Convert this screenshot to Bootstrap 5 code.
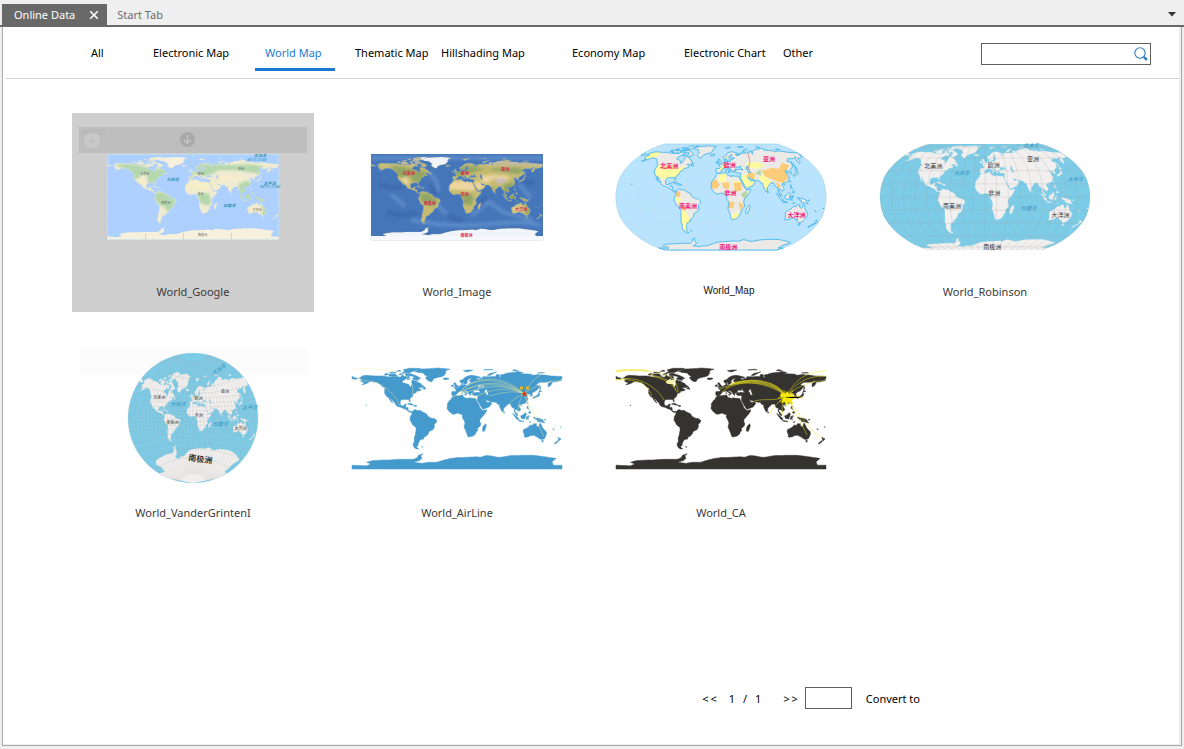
<!DOCTYPE html>
<html lang="en">
<head>
<meta charset="utf-8">
<meta name="viewport" content="width=device-width, initial-scale=1">
<title>Online Data</title>
<link href="https://cdn.jsdelivr.net/npm/bootstrap@5.3.0/dist/css/bootstrap.min.css" rel="stylesheet">
<style>
  body { background: #efefef; color: #000; font: 11px/16px "Noto Sans", "Noto Sans CJK SC", sans-serif; }
  a { color: inherit; text-decoration: none; }
  .doc-tabs { height: 27px; padding: 4px 8px 0 2px; border-bottom: 2px solid #696969; color: #6b6b6b; }
  .doc-tab { height: 21px; line-height: 21px; }
  .doc-tab.current { background: #696969; color: #fff; padding: 0 8px 0 12px; margin-right: 10px; gap: 14px; }
  .plain { background: none; border: 0; padding: 0; color: inherit; line-height: inherit; display: block; }
  .sheet { background: #fff; margin: 0 2px 3px; border: solid #a9a9a9; border-width: 0 1px 1px; box-shadow: inset -2px -1px #efefef; }
  .filters { height: 52px; margin: 0 2px 0 3px; padding: 0 28px 0 75px; border-bottom: 1px solid #d0d0d0; }
  .kinds { display: grid; grid-template-columns: 62px 112px 90px 86px 131px 112px 99px auto; white-space: nowrap; }
  .kinds a { display: block; width: max-content; height: 34px; margin-top: 10px; padding: 8px 10px 0; }
  .kinds a.active { width: 80px; color: #1c78d0; border-bottom: 3px solid #1c78d0; }
  .find { width: 170px; height: 22px; margin-top: 16px; border: 1px solid #5f5f5f; padding-right: 2px; }
  .find input, .page-no { font-size: 11px; outline: 0; }
  .tiles { display: grid; grid-template-columns: repeat(auto-fill, 242px); gap: 22px; padding: 34px 0 34px 69px; }
  .tile { height: 199px; font-size: 11px; color: #3a3a3a; }
  .tile.picked { background: #cecece; }
  .thumb { height: 168px; }
  .thumb svg { position: relative; display: block; overflow: visible; }
  .tools { position: absolute; top: 14px; left: 7px; right: 7px; height: 26px; background: #fbfbfb; }
  .picked .tools { background: #bebebe; }
  .name { line-height: 22px; }
  .name.alt { font-family: "Liberation Sans", sans-serif; font-size: 10px; line-height: 20px; padding-left: 16px; color: #111; }
  .pager { padding: 0 261px 34px 0; line-height: 24px; }
  .count { margin: 0 22px 0 12px; }
  .page-no { width: 47px; height: 22px; border: 1px solid #5f5f5f; border-radius: 0; margin: 0 14px 0 7px; }
</style>
</head>
<body class="d-flex flex-column min-vh-100">
<header class="doc-tabs d-flex">
  <div class="doc-tab current d-flex align-items-center">
    <a href="#online">Online Data</a>
    <button class="plain" type="button" aria-label="Close tab"><svg class="d-block" width="10" height="10" viewBox="0 0 10 10" stroke="#fff" stroke-width="1.6"><path d="M1.2 1.2l7.600 7.600M8.800 1.200L1.200 8.800"/></svg></button>
  </div>
  <a class="doc-tab" href="#start">Start Tab</a>
  <button class="plain ms-auto align-self-center" type="button" aria-label="Tab list"><svg class="d-block" width="8" height="5" viewBox="0 0 8 5"><path d="M0 0h8L4 4.500z" fill="#333"/></svg></button>
</header>

<main class="sheet flex-grow-1 d-flex flex-column">
  <div class="filters d-flex justify-content-between">
    <nav class="kinds" aria-label="Map kinds">
      <a href="#all">All</a>
      <a href="#electronic">Electronic Map</a>
      <a href="#world" class="active" aria-current="page">World Map</a>
      <a href="#thematic">Thematic Map</a>
      <a href="#hillshading">Hillshading Map</a>
      <a href="#economy">Economy Map</a>
      <a href="#chart">Electronic Chart</a>
      <a href="#other">Other</a>
    </nav>
    <form class="find d-flex align-items-center">
      <input class="plain flex-grow-1 w-100" type="text" aria-label="Search maps">
      <button class="plain" type="button" aria-label="Search"><svg class="d-block" width="14" height="14" viewBox="0 0 14 14" fill="none" stroke="#2a7ac0"><circle cx="6" cy="6" r="5.200" stroke-width="1.100"/><path d="M9.800 9.800L13 13" stroke-width="2.400"/></svg></button>
    </form>
  </div>

  <section class="tiles" aria-label="Maps">
    <a href="#google" class="tile picked text-center">
      <div class="thumb position-relative d-flex align-items-center justify-content-center">
        <div class="tools"><svg width="228" height="26" viewBox="0 0 228 26" fill="none"><circle cx="13" cy="13" r="8" fill="#c9c9c9"/><path d="M13 8v8M10 13l3 3 3-3" stroke="#bebebe" stroke-width="1.500"/><path d="M2 6h21M5 4h7M14 3h11v4h-6" stroke="#b0b0b0" stroke-dasharray="2 1"/><circle cx="108.500" cy="12.500" r="7.500" fill="#a9a9a9"/><path d="M108.500 8v8.500M105 13l3.500 3.500 3.500-3.500" stroke="#c8c8c8" stroke-width="1.200"/></svg></div>
        <svg data-map="google" width="172" height="86" viewBox="0 0 172 86"></svg>
      </div>
      <div class="name">World_Google</div>
    </a>
    <a href="#image" class="tile text-center">
      <div class="thumb position-relative d-flex align-items-center justify-content-center"><svg data-map="image" width="172" height="86" viewBox="0 0 172 86"></svg></div>
      <div class="name">World_Image</div>
    </a>
    <a href="#map" class="tile text-center">
      <div class="thumb position-relative d-flex align-items-center justify-content-center"><svg data-map="political" width="210" height="106" viewBox="0 0 210 106"></svg></div>
      <div class="name alt">World_Map</div>
    </a>
    <a href="#robinson" class="tile text-center">
      <div class="thumb position-relative d-flex align-items-center justify-content-center"><svg data-map="robinson" width="210" height="106" viewBox="0 0 210 106"></svg></div>
      <div class="name">World_Robinson</div>
    </a>
    <a href="#grinten" class="tile text-center">
      <div class="thumb position-relative d-flex align-items-center justify-content-center"><div class="tools"></div><svg data-map="grinten" width="130" height="130" viewBox="0 0 130 130"></svg></div>
      <div class="name">World_VanderGrintenI</div>
    </a>
    <a href="#airline" class="tile text-center">
      <div class="thumb position-relative d-flex align-items-center justify-content-center"><svg data-map="airline" width="210" height="101" viewBox="0 0 210 101"></svg></div>
      <div class="name">World_AirLine</div>
    </a>
    <a href="#ca" class="tile text-center">
      <div class="thumb position-relative d-flex align-items-center justify-content-center"><svg data-map="ca" width="210" height="101" viewBox="0 0 210 101"></svg></div>
      <div class="name">World_CA</div>
    </a>
  </section>

  <footer class="pager mt-auto d-flex justify-content-end">
    <button class="plain" type="button" aria-label="Previous page">&lt;&thinsp;&lt;</button>
    <span class="count d-flex gap-2"><span>1</span><span>/</span><span>1</span></span>
    <button class="plain" type="button" aria-label="Next page">&gt;&thinsp;&gt;</button>
    <input class="page-no" type="text" aria-label="Page number">
    <button class="plain" type="button">Convert to</button>
  </footer>
</main>
<script src="https://cdn.jsdelivr.net/npm/bootstrap@5.3.0/dist/js/bootstrap.bundle.min.js"></script>
<script>
// Coastlines as longitude,latitude rings.
const land = `
-168,66 -162,70 -156,71 -141,70 -128,70 -115,68 -108,68 -96,68 -94,72 -90,69 -82,69 -81,67 -86,66 -94,61 -94,58.5 -88,57 -82,55 -82,52 -79,51.5 -77,56 -78,60 -77,62.5 -70,61.5 -66,58.5 -62,57 -60,54 -56,52 -60,50 -67,50 -65,48.5 -61,46 -64,44.5 -70,43.5 -70,41.5 -74,40 -76,37 -76,35 -81,31 -80,26 -81,25.5 -83,29.5 -85,29.8 -90,29.5 -94,29.5 -97,27.5 -97.5,22 -95,18.5 -91,19 -90,21.3 -87,21.5 -88.5,16 -84,15.8 -83.5,11 -81,9 -78,9.3 -77.3,8 -80,7.5 -83,8.5 -86,11.5 -88,13 -92,14 -95,16 -101,17.3 -105,20 -106,23 -109,26 -112,30 -114.5,31.5 -112,27 -110,23.2 -112,25 -115,28.5 -117,32.5 -120.5,34.5 -124,40 -124,47 -123,49 -128,51.5 -131,55 -136,58.5 -145,60.3 -150,60 -153,58 -160,55.5 -163,55 -158,58.5 -162,59 -165,61 -165,63.5 -161,64.5
-62,66 -68,63 -66,62 -77,64.5 -73,68 -78,70 -88,70.5 -89,73.5 -80,73.7 -72,71 -67,69
-117,70 -116,73 -106,73.5 -101,69 -110,68.7
-125,72 -121,74.5 -117,73 -122,71
-90,77 -92,80.5 -82,83 -65,83 -62,82 -73,79 -79,76.3
-94,75 -92,76.6 -80,75.5 -82,74.5
-116,75 -112,76.5 -105,76 -105,75
-100,72 -97,74 -92,74 -96,72
-104,78 -98,80 -96,78
-86,64 -84,66 -80,64
-59,48 -56,51.5 -53,47
-85,22 -80,23.3 -74,20 -78,20
-74,18.5 -72,20 -68.5,18.6 -71,17.6
-73,78 -67,80 -60,82 -45,82.5 -33,83.6 -22,82.5 -12,81.5 -18,80 -20,76 -19,74 -22,72 -22,70.5 -27,68.5 -33,67.5 -40,65 -43,60 -48,61 -52,64 -54,67 -51,69.5 -55,71.5 -58,75 -67,76
-24,65.5 -22,66.4 -16,66.5 -13.5,65 -19,63.4 -22.5,64
-77.3,8 -75,11 -71.7,12.3 -68,11 -62,10.6 -60,8.5 -52,5 -50,1 -44,-2.5 -39,-3 -35,-6 -35,-9 -39,-13 -39,-18 -41,-22 -48,-25.5 -49,-29 -53,-33.5 -57,-35 -57,-38 -62,-39 -65,-42 -65.5,-45 -67.5,-46.5 -66,-48 -69,-51 -68.5,-53 -65.5,-55 -70,-55 -74,-52 -75.5,-47 -73,-42 -73.5,-37 -71.5,-31 -70.3,-24 -70.3,-18.3 -76,-14 -79,-8 -81,-5 -80,-2.5 -80,0.5 -77.5,4
-61,-51.5 -59,-51.3 -58.5,-52.3
-6,35.8 0,36 10,37.2 11,34 15,32.3 20,31 20,32.8 25,31.7 31,31.5 32.5,31 32.5,29.8 35.5,24 37.3,20.5 39.5,15.5 43,12 44,10.5 51,12 50.5,9.5 47.5,4.5 43,-0.5 39.5,-4.5 39,-8 40.7,-11 40.5,-15 35,-20 35.5,-24 32.8,-26 32.5,-28.5 28,-33 20,-34.8 18.3,-33.5 17,-29 14.5,-23 12,-17.5 13.7,-11 12,-6 9,-1 9.5,4 6,4.3 2,6.3 -3,5 -7.5,4.4 -13,8.5 -15,11 -17.3,14.7 -16.2,19 -17,21.5 -13,27.7 -9.7,30 -9.5,32.5
49.3,-12 50.3,-15.8 47,-25 44,-25 43.5,-22 44.5,-16.5
-9,37 -9,43 -2,43.5 -1.2,46 -4.5,48.5 -1.5,49.5 2,51 4.5,53 8.3,54 8,57 10.6,57.7 10,55 14,54 19,54.5 21.5,57.5 24,57.2 23.5,59.2 29,60 23,60 21.3,61 22,63.2 25.3,65 22,65.8 17.3,62 17,60.5 18.5,59.5 16.5,57 14,55.5 12.8,55.5 11,59 8,58 5.3,59 5,62 10,64 14.5,68 19,70 25.5,71 31,70.3 41,67.5 40,66 33,66.7 35,64.2 38,64 40,65 44,66 44,68.5 54,68.5 60,69 67,68.7 67,72 71,73 73,71 72.5,67 75,68 74.5,72 80,72.5 81,73.5 87,75 98,76 104,77.7 113,76 108,73.5 114,73.7 127,73 130,71 140,72.5 150,71.5 160,70 170,69.5 180,69 180,65 177,64.5 179.5,62.5 170,60 163.5,59.5 162,56 160,53 156.5,51 156,57 163.5,62 160,61.5 155,59.3 142,59 135.3,54.8 141,53 140.5,50 136,44.5 132,43 128,40 129.3,36.5 126.5,34.5 125,39.5 121.5,39 121.5,40.8 118,39 120,37.5 122.5,37 119.2,35 121.8,31 120,26.5 116.5,23 110.5,21.3 106.5,20 106,18.5 109,13 109,11.5 105,8.7 104.8,10.4 101,13 99.3,11 99.3,9.2 103.3,5 104,1.3 101.3,2.8 98.5,8 98,15 94.3,16 92,22 87,21.3 82.3,16.5 80.3,15 79.8,10.3 77.5,8 73.5,16 72.7,21 70,21 67,24.8 61.5,25.2 57,25.8 56,27 51.5,27.8 48.5,30 50,26.5 51.5,25 54,24.2 56.3,26 59.8,22.5 55,17 45,12.8 42.8,14.5 39,21 34.9,28 35.5,33.5 36,36.5 30.5,36.5 27.5,37 26.3,40 29,41 35,42 41.5,41.3 37,45 39,47.2 35,46.2 33.5,44.6 30.7,46.3 28,43.5 28,41.5 26,40.8 23,40.3 24,38 22.8,36.5 19.5,40.5 19.3,42 13.5,45.5 12.5,44 18.5,40 16.5,38 15.5,40 10.5,43 8.8,44.3 3.2,43 0,39.5 -2,36.8 -5.5,36
47,44 49,46.5 53,46.8 51,44.5 53,41 54,37 50,37.3 49.5,40.5
-180,69 -175,67 -170,66 -173,64.3 -180,65
-5.5,50 1.3,51.2 1.5,52.8 -2,56 -2,57.6 -5,58.6 -5.5,56 -3,54 -4.5,52
-10,52 -6.3,52.2 -6,55 -10,54
52,71 56,74 68,77 56,70.7
11,79 20,80.3 27,80 17,76.7
46,80.3 58,81.5 62,80.5
95,79 98,81 105,79
138,75 145,76 150,75
142,54 143.5,49 142,46
140,41.5 142,39.5 140.8,35.5 136,33.6 130.5,31.2 130,33.5 136,35.7 139,38
140,42 141.7,45.5 145.3,43.5
120,23 121.5,25 121,22
109,19 110.5,20 110.5,18.5
120,16 121,18.5 122,18.3 121.5,14 124,12.7 120.5,14
122,7 125,9.8 126.5,7.5 125.5,5.8
80,9.5 81.8,7 80.3,6
8,41 9.5,41 9,39
12.5,38 15.5,38 15,36.7
95.3,5.6 98,4 103.5,-1 106,-3 105.5,-5.8 102,-4 98.5,1
105,-6.8 108,-6.5 114.5,-7.7 114,-8.7 106,-7.5
109,1.5 113,3.2 117,7 119,5 117.7,1 116,-4 110.5,-3
119.5,-5.5 119,-3 120,1 125,1.5 120.5,.3 121,-1 123.3,-1 121.5,-2.5 122.5,-5 120.5,-3
123.5,-10.3 127,-8.4 125,-8.6
131,-1 134,-.8 135,-3.3 138,-1.7 145,-4.3 148,-6 147,-7 150.5,-10.5 147,-9.8 143,-9 138,-8.3 137.5,-5 133,-4
149,-5.6 152,-4.3 152,-5.5
164,-20.3 167,-22.3 166,-22.3
177,-17.5 179,-17 178,-18.3
-156,20.3 -155,19.5 -156,19
114,-22 117,-20.7 122,-18 126,-14 129.5,-15 131,-12 136.5,-12 135.5,-15 140,-17.5 141.5,-13 142.5,-10.8 145,-15 146.5,-19 150.5,-23 153.3,-26 153,-31 150,-37.3 146.5,-39 143.5,-38.7 139.5,-36.5 137.8,-35 138,-33 135.8,-34.8 134,-32.7 131,-31.6 126,-32.3 123.5,-34 118,-35 115,-34.3 115.7,-31.5 113.5,-26
145,-40.8 148.2,-40.8 147.5,-43.4 146,-43.4
173,-34.5 175.5,-37 178.3,-37.8 177,-39.5 175,-41.5 174,-39
172.8,-40.6 174,-41.8 171,-44.5 168.5,-46.5 166.7,-45.8
-180,-83 -155,-84 -148,-81 -155,-78 -146,-75.5 -135,-74.5 -115,-74 -100,-73 -85,-73 -75,-73 -68,-70 -66,-66 -58,-63.3 -62,-67 -60,-71 -64,-75 -75,-78 -60,-80 -50,-78 -35,-78 -25,-75 -12,-71.5 0,-70 15,-69.5 33,-68.5 40,-69.5 50,-66.5 57,-67 70,-69.5 78,-69 90,-66.8 110,-66 130,-66 150,-68.5 170,-71.5 163,-77 165,-83 180,-83 180,-90 -180,-90`;

const rings = text => text.trim().split('\n').map(r => r.trim().split(' ').map(p => p.split(',').map(Number)));

// Projections: longitude and latitude to picture coordinates.
const plate = (w, h, top) => (x, y) => [(x + 180) / 360 * w, Math.min(h, (top - y) / 360 * w)];
const table = [[1, 0], [.9986, .062], [.9954, .124], [.99, .186], [.9822, .248], [.973, .31], [.96, .372], [.9427, .434], [.9216, .4958], [.8962, .5571], [.8679, .6176], [.835, .6769], [.7986, .7346], [.7597, .7903], [.7186, .8435], [.6732, .8936], [.6213, .9394], [.5722, .9761], [.5322, 1]];
const robinson = (x, y) => {
  const a = Math.abs(y) / 5, i = Math.min(17, Math.floor(a)), t = a - i;
  const k = table[i][0] + (table[i + 1][0] - table[i][0]) * t, v = table[i][1] + (table[i + 1][1] - table[i][1]) * t;
  return [105 + k * x / 180 * 105, 53 - Math.sign(y) * v * 53];
};
const grinten = (x, y) => {
  const R = 65, l = Math.abs(x) / 180, s = Math.min(1, Math.abs(y) / 90), th = Math.asin(s), sy = Math.sign(y), sx = Math.sign(x);
  if (s === 0) return [R + R * l * sx, R];
  if (l < .0001 || s > .9999) return [R, R - sy * R * Math.tan(th / 2)];
  const A = .5 * Math.abs(1 / l - l), c = Math.cos(th), G = c / (s + c - 1), P = G * (2 / s - 1), Q = A * A + G, D = P * P + A * A, E = G - P * P;
  const u = (A * E + Math.sqrt(Math.max(0, A * A * E * E - D * (G * G - P * P)))) / D;
  const v = (P * Q - A * Math.sqrt(Math.max(0, (A * A + 1) * D - Q * Q))) / D;
  return [R + sx * R * u, R - sy * R * Math.abs(v)];
};

const line = (pts, f) => {
  const out = [];
  pts.forEach((p, i) => {
    const q = pts[i + 1];
    if (!q) { out.push(f(...p)); return; }
    const n = Math.max(1, Math.ceil(Math.hypot(q[0] - p[0], q[1] - p[1]) / 5));
    for (let j = 0; j < n; j++) out.push(f(p[0] + (q[0] - p[0]) * j / n, p[1] + (q[1] - p[1]) * j / n));
  });
  return 'M' + out.map(p => p.map(n => n.toFixed(1)).join(' ')).join('L');
};
const shape = (text, f) => rings(text).map(r => line(r.concat([r[0]]), f) + 'Z').join('');
const graticule = (f, step) => {
  let d = '';
  for (let x = -180; x <= 180; x += step) d += line([[x, -89], [x, 89]], f);
  for (let y = -80; y <= 80; y += step) d += line([[-180, y], [180, y]], f);
  return d;
};

const continents = [['北美洲', -101, 48], ['南美洲', -57, -13], ['非洲', 16, 6], ['欧洲', 17, 49], ['亚洲', 101, 58], ['大洋洲', 134, -27], ['南极洲', 20, -80]];
const oceans = [['大西洋', -43, 36], ['印度洋', 76, -17], ['太平洋', 160, 27], ['北冰洋', 140, 86]];
const names = (list, f, size, fill, more = '') => list.map(([t, x, y]) => {
  const [a, b] = f(x, y);
  return `<text x="${a.toFixed(1)}" y="${(b + size / 3).toFixed(1)}" font-size="${size}" fill="${fill}" text-anchor="middle" ${more}>${t}</text>`;
}).join('');

const forest = `-140,66 -110,62 -75,55 -60,50 -75,35 -82,30 -92,32 -98,45 -118,40 -124,48 -135,60
-78,8 -60,8 -50,0 -40,-8 -48,-20 -62,-16 -75,-10
8,6 30,8 35,-5 30,-18 14,-14
-8,43 10,44 30,50 45,55 80,60 130,62 140,55 130,48 100,52 60,58 40,62 20,66 5,60 -2,50
96,26 120,32 122,24 108,10 98,8
75,24 82,20 78,10
95,6 119,6 150,-8 140,-9 105,-7
143,-12 154,-28 148,-38 141,-36`;
const woods = `-165,68 -135,70 -110,66 -90,60 -60,58 -56,48 -72,38 -78,30 -94,29 -96,44 -105,50 -112,40 -124,36 -128,52 -150,62
-80,10 -62,10 -48,2 -35,-6 -42,-24 -52,-32 -60,-20 -72,-16 -80,-6
8,8 32,8 38,-4 36,-18 24,-16 14,-12
-10,37 -8,44 4,48 26,44 44,50 52,56 90,56 130,50 142,46 142,60 150,64 120,68 70,67 40,69 20,70 5,62 4,54 -6,50 2,42
95,28 112,34 124,30 118,20 108,8 98,2 96,16
90,10 120,8 152,-6 150,-12 132,-10 105,-10
141,-12 147,-18 155,-26 150,-40 142,-38 147,-28
112,-30 120,-35 114,-36`;
const desert = `-17,30 10,34 32,31 40,16 30,13 -16,16
36,32 50,30 58,22 45,14
48,44 75,46 110,44 105,36 75,38 62,27 52,34
116,-22 138,-20 140,-30 120,-31
-118,40 -104,40 -100,26 -110,26`;
const poles = `-75,84 -10,84 -15,70 -42,59 -56,66 -75,76
-180,-62 180,-62 180,-90 -180,-90`;
const yellow = `-168,71 -141,70 -141,60 -160,55 -168,60
-125,49 -95,49 -83,44 -67,47 -74,37 -80,25 -97,26 -117,32
-73,-20 -62,-22 -55,-34 -65,-55 -74,-50
-2,36 10,37 9,22 -5,24
20,24 35,24 37,15 24,10
35,32 60,38 62,24 45,13 38,20
68,35 80,32 90,22 78,8 72,18
50,52 75,54 86,48 70,43 52,45
17,-28 30,-22 32,-30 20,-35
-10,44 8,50 14,46 0,40
-80,0 -68,-2 -72,-12`;
const orange = `74,40 96,44 110,43 122,53 134,48 120,40 121,30 108,21 98,24 80,31
-17,24 -9,27 -2,18 -8,12 -16,14
2,22 14,22 14,13 4,13
22,22 36,22 35,10 24,8
-78,9 -70,8 -70,1 -77,0
-69,-10 -60,-17 -64,-22 -69,-18
12,-6 23,-8 22,-17 12,-17
95,24 104,18 100,12
45,30 54,40 62,34 58,26
30,-8 40,-12 33,-20`;
const green = `44,10 46,2 40,-3 34,4
62,36 74,42 72,32
5,54 12,50 2,46
10,60 16,68 12,58`;

const mapDefs = {
  google(id) {
    const f = plate(172, 86, 90), d = shape(land, f);
    return `<rect width="172" height="86" fill="#aed0ff"/><clipPath id="${id}"><path d="${d}" clip-rule="evenodd"/></clipPath>
      <filter id="${id}soft"><feGaussianBlur stdDeviation="1"/></filter>
      <path d="${d}" fill="#eeebd2" fill-rule="evenodd"/>
      <g clip-path="url(#${id})"><g filter="url(#${id}soft)"><path d="${shape(woods, f)}" fill="#b5d7ad"/><path d="${shape(desert, f)}" fill="#f6edc9"/></g><path d="${shape(poles, f)}" fill="#f6f0dd"/></g>
      <path d="M38.500 79v7M76.500 79v7M124.500 79v7" stroke="#d9d3bf"/>
      <rect x=".5" y=".5" width="171" height="85" fill="none" stroke="#c4e2ee" stroke-dasharray="2 1"/>`
      + names(continents, f, 3, '#666') + names(oceans, f, 4, '#2f93b0', 'font-style="italic" font-weight="700"')
      + `<g font-size="3" fill="#2f93b0" text-anchor="middle" font-style="italic"><text x="150" y="7">ARCTIC OCEAN</text><text x="163" y="34">PACIFIC OCEAN</text></g>`;
  },
  image(id) {
    const f = plate(172, 86, 90), d = shape(land, f);
    return `<rect width="172" height="86" fill="#4676ba"/><clipPath id="${id}"><path d="${d}" clip-rule="evenodd"/></clipPath><clipPath id="${id}box"><rect width="172" height="86"/></clipPath>
      <filter id="${id}soft"><feGaussianBlur stdDeviation="1.500"/></filter>
      <g clip-path="url(#${id}box)"><g filter="url(#${id}soft)" fill="none" opacity=".6"><path d="M0 4h172M58 18q12 12 8 22t10 20M100 62l18-14 14 10 30 8M20 40l14 12M148 30l12 14M40 66q40 8 80 4t50 2" stroke="#6c9ad2" stroke-width="4"/><path d="M8 30q14 6 26 2M16 58q16 6 30 0M60 30q2 8 8 12M108 54q2-8 8-10M78 60q4 8 14 6M152 26q6 4 12 2" stroke="#3763a6" stroke-width="5"/></g></g>
      <path d="${d}" fill="#c6bb70" fill-rule="evenodd" stroke="#7fa5c5" stroke-width=".4"/>
      <g clip-path="url(#${id})"><g filter="url(#${id}soft)"><path d="${shape(forest, f)}" fill="#91a565"/><path d="${shape(desert, f)}" fill="#eed6a2"/><path d="${shape('80,38 102,38 98,28 82,30', f)}" fill="#c8bcc8"/><path d="${shape('60,76 180,74 180,66 60,67\n-168,72 -90,84 -60,74 -90,68', f)}" fill="#c2baa8"/></g><path d="${shape(poles, f)}" fill="#f1f4fa"/></g>
      <path d="M0 82h172v4H0z" fill="#f7f8fc"/>`
      + names(continents, f, 4, '#d8284f', 'font-weight="700"');
  },
  political(id) {
    const f = robinson, d = shape(land, f), edge = shape('-180,-90 -180,90 180,90 180,-90', f);
    return `<path d="${edge}" fill="#b9e4ff" stroke="#8fd0f2" stroke-width=".6"/><path d="${graticule(f, 20)}" fill="none" stroke="#cfd8dc" stroke-width=".3"/>
      <clipPath id="${id}"><path d="${d}" clip-rule="evenodd"/></clipPath><path d="${d}" fill="#eceae6" fill-rule="evenodd"/>
      <g clip-path="url(#${id})"><path d="${shape(yellow, f)}" fill="#fffba0"/><path d="${shape(orange, f)}" fill="#fccb78"/><path d="${shape(green, f)}" fill="#b5d6a4"/></g>
      <path d="${d}" fill="none" stroke="#45b6ec" stroke-width=".9"/><path d="M132 10l2 8-2 8" fill="none" stroke="#e0604a" stroke-width=".6"/>`
      + names(continents, f, 6, '#ee2277', 'font-weight="700"');
  },
  robinson() {
    const f = robinson, edge = shape('-180,-90 -180,90 180,90 180,-90', f);
    return `<path d="${edge}" fill="#7ccbe7"/><path d="${shape(land, f)}" fill="#f2f0ee" fill-rule="evenodd" stroke="#f2f0ee" stroke-width=".3"/><path d="${graticule(f, 20)}" fill="none" stroke="#a9a9a9" stroke-opacity=".5" stroke-width=".5"/>`
      + names(continents, f, 6, '#333') + names(oceans, f, 5, '#2c8fc4', 'font-style="italic"');
  },
  grinten() {
    const f = grinten;
    return `<circle cx="65" cy="65" r="65" fill="#7ccbe7"/><path d="${shape(land, f)}" fill="#f2f0ee" fill-rule="evenodd" stroke="#f2f0ee" stroke-width=".3"/><path d="${graticule(f, 10)}" fill="none" stroke="#a9a9a9" stroke-opacity=".4" stroke-width=".5"/>`
      + names(continents.slice(0, 6), f, 4, '#333') + names(oceans.slice(0, 3), f, 5, '#2c8fc4', 'font-style="italic"')
      + '<text x="92" y="18" font-size="5" fill="#2c8fc4" font-style="italic" text-anchor="middle" transform="rotate(-35 92 18)">北冰洋</text>'
      + '<text x="72" y="109" font-size="8" font-weight="700" fill="#333" text-anchor="middle" transform="rotate(8 72 109)">南极洲</text>';
  },
  airline() {
    const f = plate(210, 101, 83.6);
    return `<path d="${shape(land, f)}" fill="#459acd" fill-rule="evenodd" stroke="#459acd" stroke-width=".5"/>
      <g fill="none" stroke="#f3ee9c" stroke-opacity=".5" stroke-width=".8"><path d="M172 26C155 8 125 6 110 22M172 26C150 8 120 9 108 24M172 26C152 11 124 12 104 28M172 26C152 14 122 12 100 30M172 26C156 16 130 16 106 28M172 26C160 19 138 20 122 30M172 26C164 22 150 24 138 28M172 26C160 30 155 38 150 46M172 26C166 34 165 40 167 50M172 26C176 36 184 52 192 69M172 26C180 42 190 58 205 70M172 26C180 12 188 2 210 1M172 26C182 18 196 12 210 13M172 26l12 4"/><path d="M0 1C20 1 44 0 54 8 60 14 62 20 60 27M0 13C24 10 40 20 48 38" stroke="#f3ee9c"/></g>
      <text x="126" y="20" font-size="3" fill="#eef6fb">欧洲</text><path d="M168 20h3M174 20h3" stroke="#e6b822" stroke-width="3"/><path d="M172.500 23l1 2h2l-1.500 1.500.5 2.500-2-1.300-2 1.300.5-2.500-1.500-1.500h2z" fill="#d6400f"/>`;
  },
  ca() {
    const f = plate(210, 101, 83.6);
    return `<path d="${shape(land, f)}" fill="#34332f" fill-rule="evenodd" stroke="#34332f" stroke-width=".5"/>
      <g fill="none" stroke="#efe21c" stroke-width=".7" stroke-opacity=".7"><path d="M170 28C155 12 125 8 110 20M170 28C150 10 120 12 106 24M170 28C152 14 124 10 103 22M170 28C160 14 135 12 118 16M170 28C160 34 150 30 138 33M170 28C160 36 156 40 154 46M170 28C164 36 166 44 168 50M170 28C176 40 186 56 191 67M170 28C180 42 190 58 205 70" stroke-width=".7"/><path d="M170 28C160 12 135 9 115 16" stroke-width="1.500"/><path d="M170 28C180 12 188 4 210 3M170 28C182 14 190 8 210 8M170 28C182 18 196 12 210 13M0 4C20 0 44 2 56 10 62 16 62 22 62 26M0 12C24 10 32 18 36 28M0 12C20 6 40 18 48 32M32 5C40 10 54 8 60 22M34 8C46 10 56 14 61 24"/></g>
      <path d="M0 3q16-2 32 0" stroke="#f6ef7a" stroke-width="2" fill="none"/><ellipse cx="54" cy="14" rx="4" ry="2" fill="#f5f0a0"/>
      <path d="M165 25l4 1 2-3 2 3 4-1-1 4 4 1-4 2 1 4-4-2-2 4-2-4-4 1 2-4-3-3z" fill="#f7e90f"/><path d="M162 30l18-2 7 2M168 22l2 16M163 34l14-11" stroke="#f7e90f" stroke-width=".8"/>`;
  }
};
document.querySelectorAll('[data-map]').forEach(svg => {
  svg.setAttribute('aria-hidden', 'true');
  svg.innerHTML = mapDefs[svg.dataset.map]('clip-' + svg.dataset.map);
});
</script>
</body>
</html>
